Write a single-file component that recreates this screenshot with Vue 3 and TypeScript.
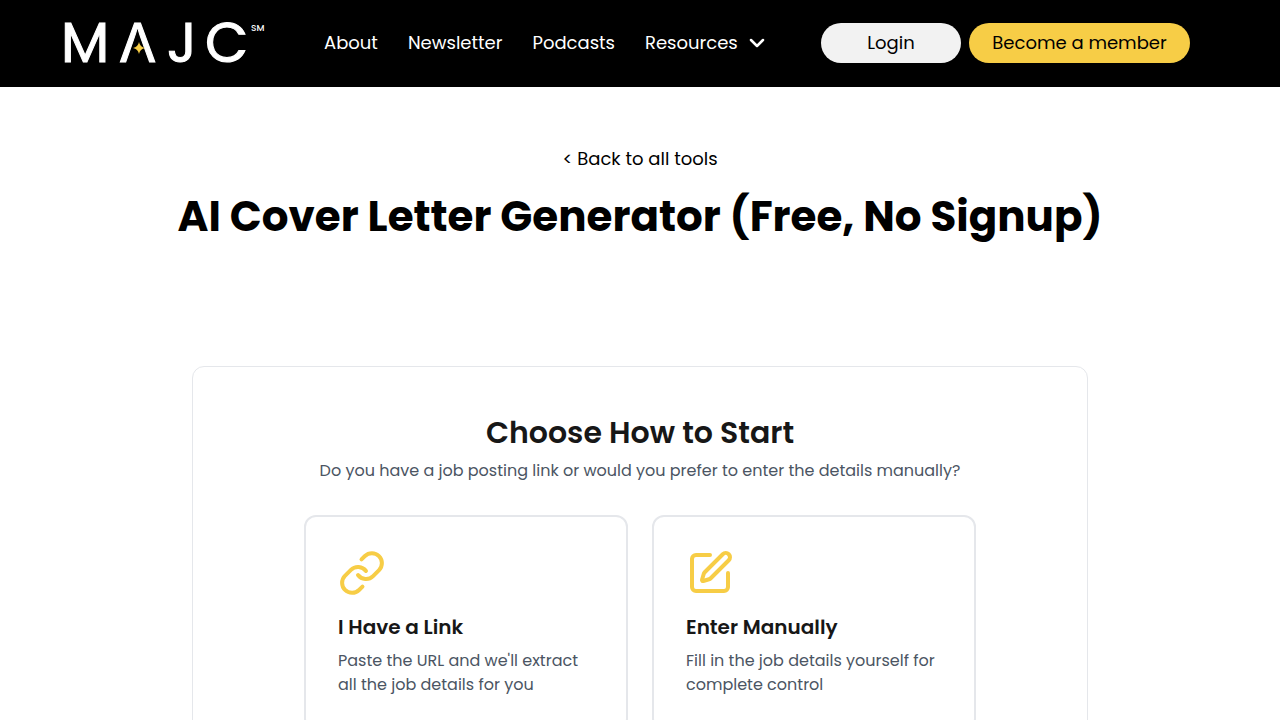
<script setup lang="ts">
interface NavItem {
  label: string
  href: string
}

interface StartOption {
  id: string
  title: string
  description: string
  paths: string[]
}

const navItems: NavItem[] = [
  { label: 'About', href: '#about' },
  { label: 'Newsletter', href: '#newsletter' },
  { label: 'Podcasts', href: '#podcasts' },
]

const options: StartOption[] = [
  {
    id: 'link',
    title: 'I Have a Link',
    description: "Paste the URL and we'll extract all the job details for you",
    paths: [
      'M10 13a5 5 0 0 0 7.54.54l3-3a5 5 0 0 0-7.07-7.07l-1.72 1.71',
      'M14 11a5 5 0 0 0-7.54-.54l-3 3a5 5 0 0 0 7.07 7.07l1.71-1.71',
    ],
  },
  {
    id: 'manual',
    title: 'Enter Manually',
    description: 'Fill in the job details yourself for complete control',
    paths: [
      'M12 3H5a2 2 0 0 0-2 2v14a2 2 0 0 0 2 2h14a2 2 0 0 0 2-2v-7',
      'M18.375 2.625a1 1 0 0 1 3 3l-9.013 9.014a2 2 0 0 1-.853.505l-2.873.84a.5.5 0 0 1-.62-.62l.84-2.873a2 2 0 0 1 .506-.852z',
    ],
  },
]
</script>

<template>
  <div class="page">
    <header class="header">
      <a class="logo" href="#home" aria-label="MAJC home">
        <svg width="202" height="44" viewBox="0 0 202 44" aria-hidden="true">
          <text class="logo-word" y="41">
            <tspan x="-3">M</tspan><tspan class="logo-peak" x="55">Λ</tspan><tspan x="103">J</tspan><tspan x="141">C</tspan>
          </text>
          <path class="logo-star" d="M75 21Q76 26 81 27Q76 28 75 33Q74 28 69 27Q74 26 75 21Z" />
          <text class="logo-mark" x="187" y="10">SM</text>
        </svg>
      </a>
      <nav class="nav" aria-label="Main">
        <a v-for="item in navItems" :key="item.label" class="nav-link" :href="item.href">{{ item.label }}</a>
        <button class="nav-link menu-button" type="button" aria-haspopup="true">
          Resources
          <svg width="18" height="12" viewBox="0 0 18 12" aria-hidden="true">
            <path d="M3 3L9 9L15 3" fill="none" stroke="currentColor" stroke-width="2.500" stroke-linecap="round" stroke-linejoin="round" />
          </svg>
        </button>
      </nav>
      <div class="actions">
        <a class="pill login" href="#login">Login</a>
        <a class="pill member" href="#join">Become a member</a>
      </div>
    </header>

    <main class="main">
      <a class="back" href="#tools">&lt; Back to all tools</a>
      <h1 class="title">AI Cover Letter Generator (Free, No Signup)</h1>

      <section class="card">
        <h2 class="card-title">Choose How to Start</h2>
        <p class="card-text">Do you have a job posting link or would you prefer to enter the details manually?</p>
        <div class="options">
          <button v-for="option in options" :key="option.id" class="option" type="button">
            <svg class="option-icon" viewBox="0 0 24 24" aria-hidden="true">
              <path v-for="d in option.paths" :key="d" :d="d" />
            </svg>
            <span class="option-title">{{ option.title }}</span>
            <span class="option-text">{{ option.description }}</span>
          </button>
        </div>
      </section>
    </main>
  </div>
</template>

<style>
body {
  margin: 0;
  background: #fff;
}
</style>

<style scoped>
.page,
.page * {
  box-sizing: border-box;
}

.page {
  font-family: Poppins, Inter, "Liberation Sans", sans-serif;
  color: #000;
}

a {
  color: inherit;
  text-decoration: none;
}

button {
  font: inherit;
  color: inherit;
  cursor: pointer;
}

.header {
  display: flex;
  align-items: center;
  padding: 21px 90px 22px 64px;
  background: #000;
  color: #fff;
}

.logo {
  display: flex;
  flex-shrink: 0;
}

.logo svg {
  overflow: visible;
}

.logo-word {
  font-size: 56px;
  fill: #fff;
  stroke: #fff;
  stroke-width: 1px;
}

.logo-peak {
  font-size: 54px;
}

.logo-mark {
  font-size: 9px;
  font-weight: 500;
  fill: #fff;
}

.logo-star {
  fill: #f7cd46;
}

.nav {
  display: flex;
  align-items: center;
  gap: 30px;
  margin-left: 58px;
}

.nav-link {
  font-size: 18px;
  line-height: 28px;
  white-space: nowrap;
}

.menu-button {
  display: flex;
  align-items: center;
  gap: 10px;
  padding: 0;
  border: 0;
  background: none;
}

.actions {
  display: flex;
  gap: 8px;
  margin-left: auto;
}

.pill {
  min-width: 140px;
  padding: 6px 23px;
  border-radius: 20px;
  font-size: 18px;
  line-height: 28px;
  color: #000;
  text-align: center;
  white-space: nowrap;
}

.login {
  background: #f2f2f2;
}

.member {
  min-width: 221px;
  background: #f7cd46;
}

.main {
  display: flex;
  flex-direction: column;
  align-items: center;
  padding: 58px 32px 64px;
}

.back {
  font-size: 18px;
  line-height: 28px;
}

.title {
  margin: 16px 0 0;
  font-size: 42px;
  font-weight: 700;
  line-height: 56px;
  text-align: center;
}

.card {
  width: 100%;
  max-width: 896px;
  margin-top: 121px;
  padding: 48px;
  border: 1px solid #e5e7eb;
  border-radius: 12px;
  text-align: center;
}

.card-title {
  margin: 0;
  font-size: 30px;
  font-weight: 600;
  line-height: 36px;
  color: #171717;
}

.card-text {
  margin: 8px 0 32px;
  font-size: 16px;
  line-height: 24px;
  color: #4b5563;
}

.options {
  display: grid;
  grid-template-columns: 1fr 1fr;
  gap: 24px;
  max-width: 672px;
  margin: 0 auto;
}

.option {
  display: flex;
  flex-direction: column;
  align-items: flex-start;
  padding: 32px;
  border: 2px solid #e5e7eb;
  border-radius: 12px;
  background: #fff;
  text-align: left;
}

.option-icon {
  width: 48px;
  height: 48px;
  margin-bottom: 16px;
  fill: none;
  stroke: #f7cd46;
  stroke-width: 2;
  stroke-linecap: round;
  stroke-linejoin: round;
}

.option-title {
  margin-bottom: 8px;
  font-size: 20px;
  font-weight: 600;
  line-height: 28px;
  color: #171717;
}

.option-text {
  font-size: 16px;
  line-height: 24px;
  color: #4b5563;
}
</style>
